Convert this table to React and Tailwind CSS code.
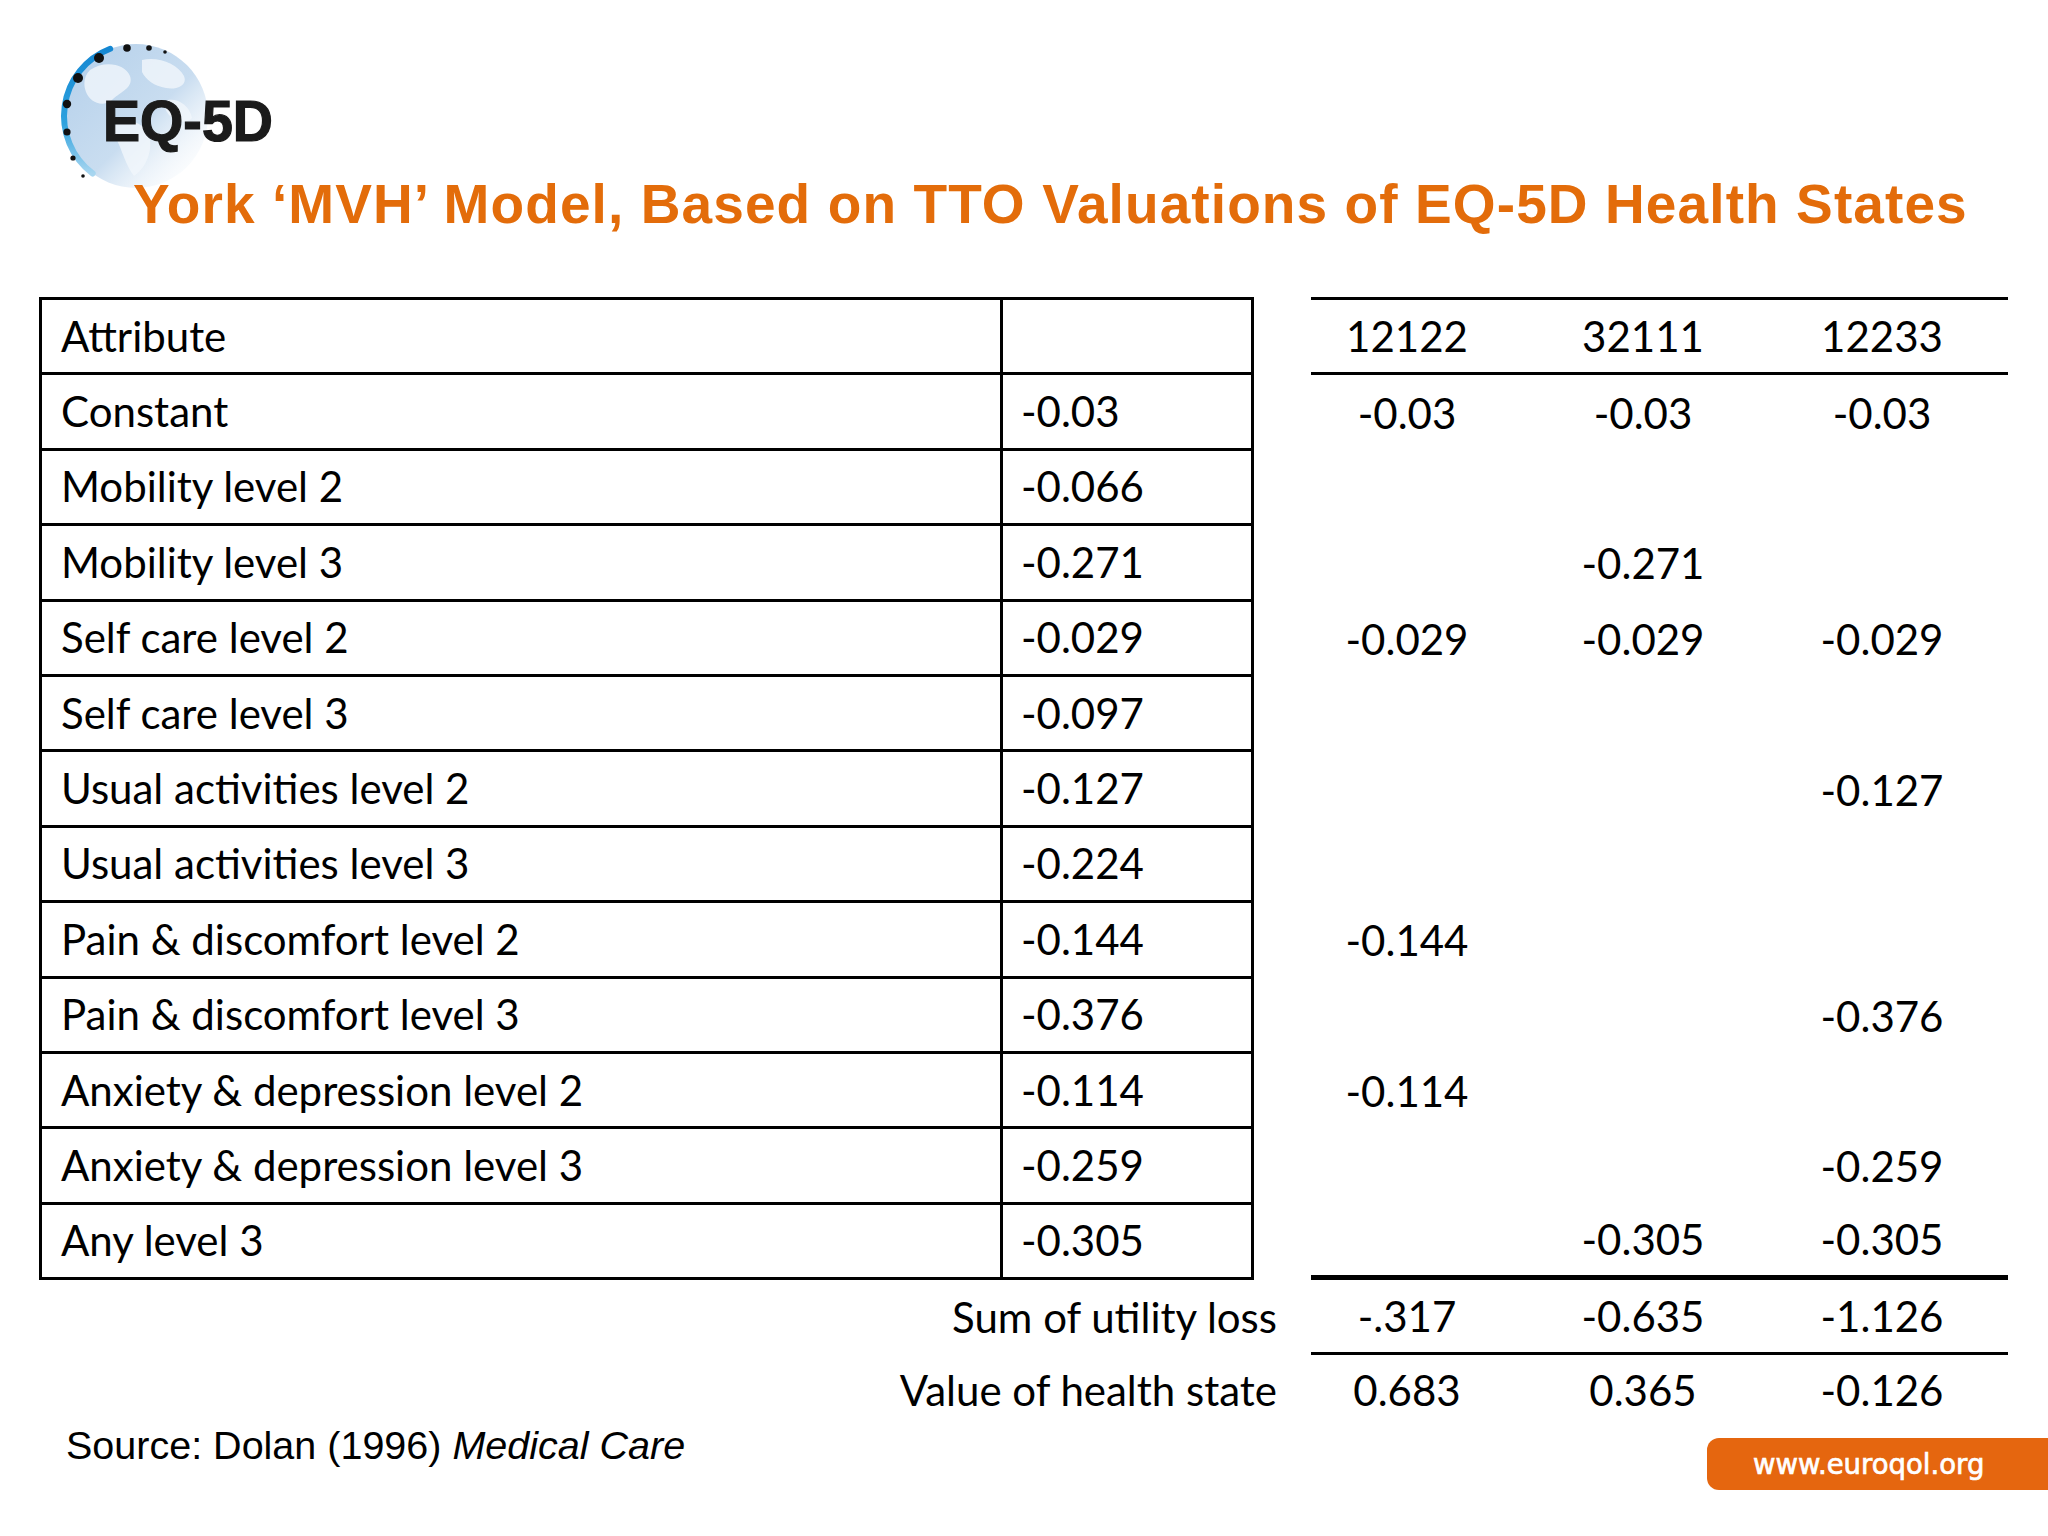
import React from 'react';

const rows = [
    ['Constant', '-0.03', '-0.03', '-0.03', '-0.03'],
    ['Mobility level 2', '-0.066', '', '', ''],
    ['Mobility level 3', '-0.271', '', '-0.271', ''],
    ['Self care level 2', '-0.029', '-0.029', '-0.029', '-0.029'],
    ['Self care level 3', '-0.097', '', '', ''],
    ['Usual activities level 2', '-0.127', '', '', '-0.127'],
    ['Usual activities level 3', '-0.224', '', '', ''],
    ['Pain & discomfort level 2', '-0.144', '-0.144', '', ''],
    ['Pain & discomfort level 3', '-0.376', '', '', '-0.376'],
    ['Anxiety & depression level 2', '-0.114', '-0.114', '', ''],
    ['Anxiety & depression level 3', '-0.259', '', '', '-0.259'],
    ['Any level 3', '-0.305', '', '-0.305', '-0.305'],
];

// globe dots, relative to the globe centre
const dots = [
    [29, -64, 1.8], [13, -68, 2.8], [-9, -68, 3.8], [-37, -58, 5],
    [-58, -38, 5], [-69, -12, 4.2], [-69, 16, 3.6], [-63, 42, 2.6], [-53, 60, 1.8],
];

const Logo = () => (
    <svg className="absolute left-[50px] top-[30px]" width="240" height="180" viewBox="0 0 240 180">
        <defs>
            <linearGradient id="globe" x1="0" y1="0" x2="1" y2="1">
                <stop offset="0" stopColor="#b3cfea" />
                <stop offset="0.55" stopColor="#c9ddf0" />
                <stop offset="1" stopColor="#ffffff" stopOpacity="0" />
            </linearGradient>
            <linearGradient id="arc" x1="0" y1="0" x2="0" y2="1">
                <stop offset="0" stopColor="#1487d2" />
                <stop offset="0.6" stopColor="#2ea2de" />
                <stop offset="1" stopColor="#a8d6f0" />
            </linearGradient>
        </defs>
        <circle cx="86" cy="86" r="72" fill="url(#globe)" />
        <g fill="#f2f7fc" opacity="0.8">
            <path d="M40 40 C55 30 75 34 80 46 C84 58 70 62 62 70 C52 78 40 72 36 62 C33 54 34 46 40 40 Z" />
            <path d="M92 30 C108 26 128 34 134 46 C138 56 126 60 116 58 C104 56 96 50 92 42 Z" />
            <path d="M70 92 C84 88 98 96 100 110 C102 124 94 140 84 146 C76 136 72 120 66 108 C62 100 64 94 70 92 Z" />
            <path d="M118 70 C128 68 140 76 142 88 C136 94 126 92 120 86 C114 80 114 74 118 70 Z" />
        </g>
        <path d="M42.7 143.5 A72 72 0 0 1 60.2 18.8" fill="none" stroke="url(#arc)" strokeWidth="6" strokeLinecap="round" />
        {dots.map(([dx, dy, r], i) => (
            <circle key={i} cx={86 + dx} cy={86 + dy} r={r} fill="#111" />
        ))}
        <text
            x="53"
            y="111"
            fontFamily="Liberation Sans, Arial, sans-serif"
            fontWeight="bold"
            fontSize="57"
            textLength="170"
            lengthAdjust="spacingAndGlyphs"
            fill="#1b1b1b"
            stroke="#1b1b1b"
            strokeWidth="1.2"
        >
            EQ-5D
        </text>
    </svg>
);

const Cell = ({ children }) => <div className="flex items-center justify-center">{children}</div>;

const App = () => {
    return (
        <div className="relative w-[2048px] h-[1536px] overflow-hidden bg-white pt-[177px] text-black font-['Lato',sans-serif]">
            <Logo />

            <h1 className="relative pl-[133px] h-[55px] text-[55px] leading-none font-bold tracking-[1.1px] text-[#e36c0a] font-['Liberation_Sans',Arial,sans-serif] whitespace-nowrap">
                York ‘MVH’ Model, Based on TTO Valuations of EQ-5D Health States
            </h1>

            <div className="mt-[65px] pl-[39px] text-[42px]">
                {/* header */}
                <div className="flex h-[78.4px]">
                    <div className="flex w-[1215px] border-[3px] border-black">
                        <div className="flex items-center w-[961px] border-r-[3px] border-black pl-[19px]">Attribute</div>
                        <div className="flex-1" />
                    </div>
                    <div className="ml-[57px] w-[697px] grid grid-cols-[192px_280px_198px] border-y-[3px] border-black">
                        <Cell>12122</Cell>
                        <Cell>32111</Cell>
                        <Cell>12233</Cell>
                    </div>
                </div>

                {rows.map(([label, coef, a, b, c], i) => (
                    <div key={label} className="flex h-[75.4px]">
                        <div className="flex w-[1215px] border-x-[3px] border-b-[3px] border-black">
                            <div className="flex items-center w-[961px] border-r-[3px] border-black pl-[19px]">{label}</div>
                            <div className="flex items-center flex-1 pl-[18px]">{coef}</div>
                        </div>
                        <div
                            className={`ml-[57px] w-[697px] grid grid-cols-[192px_280px_198px] ${i === rows.length - 1 ? 'border-b-[5px] border-black' : ''}`}
                        >
                            <Cell>{a}</Cell>
                            <Cell>{b}</Cell>
                            <Cell>{c}</Cell>
                        </div>
                    </div>
                ))}

                {/* totals */}
                <div className="flex h-[75.4px]">
                    <div className="flex items-center justify-end w-[1272px] pr-[34px]">Sum of utility loss</div>
                    <div className="w-[697px] grid grid-cols-[192px_280px_198px] border-b-[3px] border-black">
                        <Cell>-.317</Cell>
                        <Cell>-0.635</Cell>
                        <Cell>-1.126</Cell>
                    </div>
                </div>
                <div className="flex h-[71px]">
                    <div className="flex items-center justify-end w-[1272px] pr-[34px]">Value of health state</div>
                    <div className="w-[697px] grid grid-cols-[192px_280px_198px]">
                        <Cell>0.683</Cell>
                        <Cell>0.365</Cell>
                        <Cell>-0.126</Cell>
                    </div>
                </div>
            </div>

            <div className="flex justify-between items-start">
                <p className="pl-[66px] text-[39.5px] leading-none font-['Liberation_Sans',Arial,sans-serif]">
                    Source: Dolan (1996) <span className="italic">Medical Care</span>
                </p>
                <div className="mt-[12px] flex items-center w-[341px] h-[52px] rounded-l-[12px] bg-[#e5660f] pl-[46px] text-[27.5px] text-white font-['DejaVu_Sans',sans-serif] [-webkit-text-stroke:0.7px_white]">
                    www.euroqol.org
                </div>
            </div>
        </div>
    );
};

export default App;
